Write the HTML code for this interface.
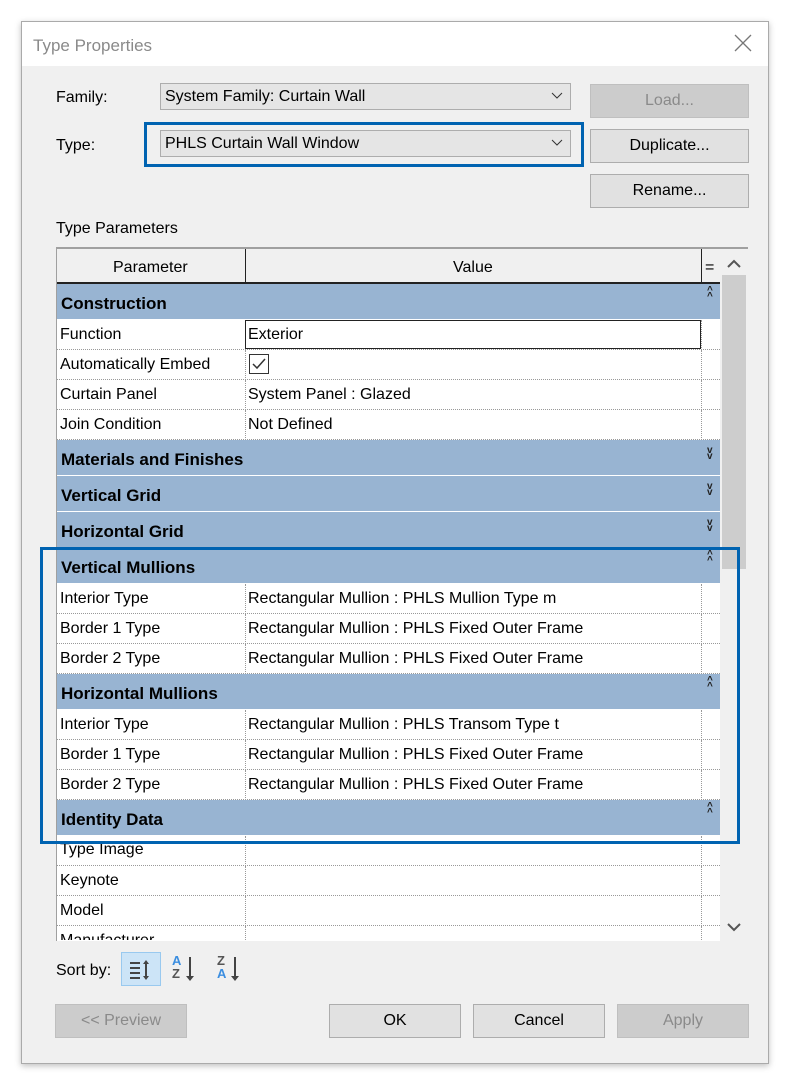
<!DOCTYPE html>
<html><head><style>
*{box-sizing:border-box;margin:0;padding:0}
body{width:794px;height:1089px;background:#fff;position:relative;font-family:"Liberation Sans",sans-serif;font-size:16px;color:#000;overflow:hidden}
.a{position:absolute}
.dlg{left:21px;top:21px;width:748px;height:1043px;background:#f0f0f0;border:1px solid #aaa;box-shadow:0 2px 6px rgba(0,0,0,.25)}
.title{left:22px;top:22px;width:746px;height:44px;background:#fff}
.btn{background:#e1e1e1;border:1px solid #adadad;text-align:center;line-height:32px}
.dis{background:#cccccc;border-color:#bfbfbf;color:#8a8a8a}
.combo{background:#e5e5e5;border:1px solid #adadad;padding-left:4px;line-height:26px}
.row{left:57px;width:663px;height:30px;background:#fff;border-bottom:1px dotted #999}
.row span{position:absolute;top:6px}
.row:before{content:"";position:absolute;left:188px;top:0;height:30px;border-left:1px dotted #999}
.row:after{content:"";position:absolute;left:644px;top:0;height:30px;border-left:1px dotted #999}
.grp{left:57px;width:663px;height:36px;background:#98b4d2;border-bottom:1px solid #fff;font-weight:bold;font-size:17px}
.grp span{position:absolute;left:4px;top:10px}
.chev{position:absolute;left:650px;top:4px;font-size:10px;font-weight:bold;line-height:6px;color:#222}
</style></head><body>
<div class="a dlg"></div>
<div class="a title"></div>
<div class="a" style="left:33px;top:36px;font-size:17px;color:#8a8a8a">Type Properties</div>
<svg class="a" style="left:734px;top:34px" width="18" height="18"><path d="M1 1L17 17M17 1L1 17" stroke="#777" stroke-width="1.3"/></svg>

<div class="a" style="left:56px;top:89px">Family:</div>
<div class="a" style="left:56px;top:137px">Type:</div>
<div class="a combo" style="left:160px;top:83px;width:411px;height:27px">System Family: Curtain Wall</div>
<div class="a combo" style="left:160px;top:130px;width:411px;height:27px">PHLS Curtain Wall Window</div>
<svg class="a" style="left:551px;top:92px" width="12" height="8"><path d="M1 1L6 6L11 1" stroke="#333" fill="none"/></svg>
<svg class="a" style="left:551px;top:139px" width="12" height="8"><path d="M1 1L6 6L11 1" stroke="#333" fill="none"/></svg>
<div class="a" style="left:144px;top:122px;width:440px;height:45px;border:3px solid #0063b1"></div>

<div class="a btn dis" style="left:590px;top:84px;width:159px;height:34px">Load...</div>
<div class="a btn" style="left:590px;top:129px;width:159px;height:34px">Duplicate...</div>
<div class="a btn" style="left:590px;top:174px;width:159px;height:34px">Rename...</div>

<div class="a" style="left:56px;top:220px">Type Parameters</div>

<div class="a" style="left:56px;top:247px;width:692px;height:694px;background:#fff;border-top:2px solid #a0a0a0;border-left:1px solid #a0a0a0"></div>
<div class="a" style="left:57px;top:249px;width:663px;height:35px;background:#f0f0f0;border-bottom:2px solid #222"></div>
<div class="a" style="left:245px;top:249px;width:1px;height:35px;background:#222"></div>
<div class="a" style="left:701px;top:249px;width:1px;height:35px;background:#222"></div>
<div class="a" style="left:113px;top:259px">Parameter</div>
<div class="a" style="left:453px;top:259px">Value</div>
<div class="a" style="left:705px;top:259px">=</div>
<div class="a" style="left:720px;top:249px;width:28px;height:692px;background:#f0f0f0"></div>
<div class="a" style="left:722px;top:275px;width:24px;height:294px;background:#cdcdcd"></div>
<svg class="a" style="left:727px;top:259px" width="14" height="10"><path d="M1 8L7 2L13 8" stroke="#555" stroke-width="2" fill="none"/></svg>
<svg class="a" style="left:727px;top:922px" width="14" height="10"><path d="M1 2L7 8L13 2" stroke="#555" stroke-width="2" fill="none"/></svg>

<div class="a grp" style="top:284px"><span>Construction</span><div class="chev">^<br>^</div></div>
<div class="a row" style="top:320px"><span style="left:3px">Function</span><div class="a" style="left:188px;top:0;width:456px;height:29px;border:1px solid #222;background:#fff"></div><span style="left:191px">Exterior</span></div>
<div class="a row" style="top:350px"><span style="left:3px">Automatically Embed</span><svg class="a" style="left:192px;top:4px" width="20" height="20"><rect x=".5" y=".5" width="19" height="19" fill="#fff" stroke="#333"/><path d="M4 10L8 14L16 5" stroke="#333" stroke-width="1.5" fill="none"/></svg></div>
<div class="a row" style="top:380px"><span style="left:3px">Curtain Panel</span><span style="left:191px">System Panel : Glazed</span></div>
<div class="a row" style="top:410px"><span style="left:3px">Join Condition</span><span style="left:191px">Not Defined</span></div>
<div class="a grp" style="top:440px"><span>Materials and Finishes</span><div class="chev" style="top:8px">v<br>v</div></div>
<div class="a grp" style="top:476px"><span>Vertical Grid</span><div class="chev" style="top:8px">v<br>v</div></div>
<div class="a grp" style="top:512px"><span>Horizontal Grid</span><div class="chev" style="top:8px">v<br>v</div></div>
<div class="a grp" style="top:548px"><span>Vertical Mullions</span><div class="chev">^<br>^</div></div>
<div class="a row" style="top:584px"><span style="left:3px">Interior Type</span><span style="left:191px">Rectangular Mullion : PHLS Mullion Type m</span></div>
<div class="a row" style="top:614px"><span style="left:3px">Border 1 Type</span><span style="left:191px">Rectangular Mullion : PHLS Fixed Outer Frame</span></div>
<div class="a row" style="top:644px"><span style="left:3px">Border 2 Type</span><span style="left:191px">Rectangular Mullion : PHLS Fixed Outer Frame</span></div>
<div class="a grp" style="top:674px"><span>Horizontal Mullions</span><div class="chev">^<br>^</div></div>
<div class="a row" style="top:710px"><span style="left:3px">Interior Type</span><span style="left:191px">Rectangular Mullion : PHLS Transom Type t</span></div>
<div class="a row" style="top:740px"><span style="left:3px">Border 1 Type</span><span style="left:191px">Rectangular Mullion : PHLS Fixed Outer Frame</span></div>
<div class="a row" style="top:770px"><span style="left:3px">Border 2 Type</span><span style="left:191px">Rectangular Mullion : PHLS Fixed Outer Frame</span></div>
<div class="a grp" style="top:800px"><span>Identity Data</span><div class="chev">^<br>^</div></div>
<div class="a row" style="top:836px"><span style="left:3px;top:5px">Type Image</span></div>
<div class="a row" style="top:866px"><span style="left:3px">Keynote</span></div>
<div class="a row" style="top:896px"><span style="left:3px">Model</span></div>
<div class="a row" style="top:926px;height:14px;overflow:hidden;border-bottom:none"><span style="left:3px">Manufacturer</span></div>
<div class="a" style="left:40px;top:547px;width:700px;height:297px;border:3px solid #0063b1"></div>

<div class="a" style="left:56px;top:962px">Sort by:</div>
<div class="a" style="left:121px;top:952px;width:40px;height:34px;background:#cce4f7;border:1px solid #99c9ef"></div>
<svg class="a" style="left:128px;top:958px" width="26" height="24"><path d="M2 5h10M2 10h10M2 15h10M2 20h10" stroke="#444" stroke-width="2"/><path d="M18 4v16" stroke="#444" stroke-width="2"/><path d="M15 6l3-4 3 4zM15 18l3 4 3-4z" fill="#444"/></svg>
<div class="a" style="left:172px;top:954px;font-size:13px;font-weight:bold;line-height:13px;color:#3b8ee0">A</div>
<div class="a" style="left:172px;top:967px;font-size:13px;font-weight:bold;line-height:13px;color:#555">Z</div>
<svg class="a" style="left:184px;top:956px" width="12" height="28"><path d="M6 1v22" stroke="#444" stroke-width="2"/><path d="M2 20l4 5 4-5z" fill="#444"/></svg>
<div class="a" style="left:217px;top:954px;font-size:13px;font-weight:bold;line-height:13px;color:#555">Z</div>
<div class="a" style="left:217px;top:967px;font-size:13px;font-weight:bold;line-height:13px;color:#3b8ee0">A</div>
<svg class="a" style="left:229px;top:956px" width="12" height="28"><path d="M6 1v22" stroke="#444" stroke-width="2"/><path d="M2 20l4 5 4-5z" fill="#444"/></svg>

<div class="a btn dis" style="left:55px;top:1004px;width:132px;height:34px">&lt;&lt; Preview</div>
<div class="a btn" style="left:329px;top:1004px;width:132px;height:34px">OK</div>
<div class="a btn" style="left:473px;top:1004px;width:132px;height:34px">Cancel</div>
<div class="a btn dis" style="left:617px;top:1004px;width:132px;height:34px">Apply</div>
</body></html>
